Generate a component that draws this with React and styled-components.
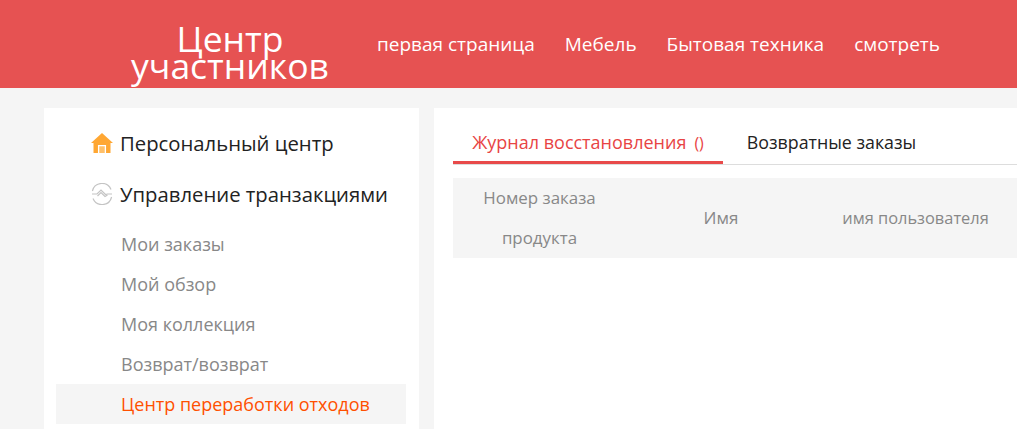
import React from "react";
import styled, { createGlobalStyle } from "styled-components";

const Global = createGlobalStyle`
  html, body { margin: 0; padding: 0; height: 429px; overflow: hidden; background: #f5f5f5; }
  body { font-family: "Open Sans", "Noto Sans", "Liberation Sans", sans-serif; }
`;
const Page = styled.div`width: 1017px; height: 429px; overflow: hidden;`;
const Header = styled.header`
  height: 88px; background: #e65252; display: flex; align-items: flex-start; color: #fff;
`;
const Logo = styled.div`
  width: 200px; margin-left: 130px; padding-top: 25px; text-align: center; height: 63px; overflow: visible;
  font-size: 35.5px; line-height: 27px; font-weight: 400; flex: none; box-sizing: border-box;
`;
const Nav = styled.nav`display: flex; gap: 30px; margin-left: 47px; padding-top: 32px;`;
const NavLink = styled.a`font-size: 19px; line-height: 24px; color: #fff;`;
const Body = styled.div`display: flex; padding: 20px 0 0 44px; gap: 15px; align-items: flex-start;`;
const Sidebar = styled.aside`
  width: 375px; height: 330px; background: #fff; flex: none; box-sizing: border-box; padding: 15px 13px 0 12px;
`;
const Group = styled.div`
  display: flex; align-items: center; gap: 7px; height: 40px; margin-bottom: 10px; padding-left: 35px;
  font-size: 20.3px; color: #222;
  & + & { margin-top: 11px; }
`;
const Item = styled.div`
  height: 40px; line-height: 40px; padding-left: 65px; font-size: 18px;
  color: ${p => (p.$active ? "#ff5000" : "#888")};
  background: ${p => (p.$active ? "#f5f5f5" : "transparent")};
`;
const Main = styled.main`width: 800px; height: 330px; background: #fff; flex: none; box-sizing: border-box; padding: 15px 0 0 19px;`;
const Tabs = styled.div`display: flex; border-bottom: 1px solid #ddd; height: 41px;`;
const Tab = styled.div`
  height: 41px; box-sizing: border-box; width: ${p => p.$w}px; text-align: center; font-size: ${p => p.$size}px; line-height: 39px;
  color: ${p => (p.$active ? "#e84444" : "#222")};
  border-bottom: ${p => (p.$active ? "3px solid #e84a4a" : "none")};
`;
const Count = styled.span`font-size: 16px; margin-left: 8px;`;
const Table = styled.div`
  margin-top: 13px; height: 80px; background: #f5f5f5; display: flex; align-items: center;
  color: #888; text-align: center;
`;
const Col = styled.div`width: ${p => p.$w}px; font-size: ${p => p.$size}px; line-height: 40px; flex: none; padding: 0 ${p => p.$pad || 0}px; box-sizing: border-box;`;

const Home = () => (
  <svg width="22" height="20" viewBox="0 0 22 20">
    <path fill="#ffa733" d="M11 0 L22 10 H19.5 V20 H2.5 V10 H0 Z" />
    <path fill="#ffc06a" stroke="#fff" strokeWidth="1.3" d="M7.6 20 V12.6 H14.4 V20" />
  </svg>
);
const Trade = () => (
  <svg width="22" height="22" viewBox="0 0 22 22" fill="none" stroke="#c4c4c4" strokeWidth="1.2">
    <path d="M1.4 8 A9.8 9.8 0 0 1 20 6.5" />
    <path d="M20.6 14 A9.8 9.8 0 0 1 2 15.5" />
    <path d="M1 11 H6 L10 7 L14.5 11.5 L16.5 11 H21" />
    <path d="M6.5 13 L10 9.5 L14 13.5 L16.5 12" />
  </svg>
);

export default function App() {
  return (
    <Page>
      <Global />
      <Header>
        <Logo>Центр участников</Logo>
        <Nav>
          <NavLink>первая страница</NavLink>
          <NavLink>Мебель</NavLink>
          <NavLink>Бытовая техника</NavLink>
          <NavLink>смотреть</NavLink>
        </Nav>
      </Header>
      <Body>
        <Sidebar>
          <Group><Home />Персональный центр</Group>
          <Group><Trade />Управление транзакциями</Group>
          <Item>Мои заказы</Item>
          <Item>Мой обзор</Item>
          <Item>Моя коллекция</Item>
          <Item>Возврат/возврат</Item>
          <Item $active>Центр переработки отходов</Item>
        </Sidebar>
        <Main>
          <Tabs>
            <Tab $active $w={270} $size={18}>Журнал восстановления<Count>()</Count></Tab>
            <Tab $w={217} $size={17.8}>Возвратные заказы</Tab>
          </Tabs>
          <Table>
            <Col $w={173} $pad={20} $size={16.9}>Номер заказа продукта</Col>
            <Col $w={190} $size={17}>Имя</Col>
            <Col $w={199} $size={16.4}>имя пользователя</Col>
          </Table>
        </Main>
      </Body>
    </Page>
  );
}
